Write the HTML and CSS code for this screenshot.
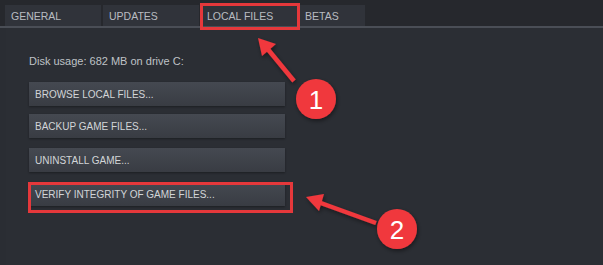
FILE: index.html
```html
<!DOCTYPE html>
<html lang="en">
<head>
  <meta charset="UTF-8">
  <title>Properties - Local Files</title>
  <link rel="stylesheet" href="styles.css">
</head>
<body>
  <!-- Tab strip -->
  <div class="tabs">
    <div class="tab">GENERAL</div>
    <div class="tab">UPDATES</div>
    <div class="tab active">LOCAL FILES</div>
    <div class="tab small">BETAS</div>
  </div>

  <!-- Local files panel -->
  <div class="panel">
    <p class="usage">Disk usage: 682 MB on drive C:</p>
    <div class="buttons">
      <button class="btn">BROWSE LOCAL FILES...</button>
      <button class="btn">BACKUP GAME FILES...</button>
      <button class="btn gap">UNINSTALL GAME...</button>
      <button class="btn">VERIFY INTEGRITY OF GAME FILES...</button>
    </div>
  </div>

  <!-- Annotation overlay -->
  <svg class="marks" width="603" height="265" viewBox="0 0 603 265">
    <defs>
      <filter id="shadow" x="-30%" y="-30%" width="160%" height="160%">
        <feDropShadow dx="1" dy="2" stdDeviation="2" flood-color="#000" flood-opacity="0.45"/>
      </filter>
    </defs>
    <rect x="201.5" y="4.5" width="97" height="24" fill="none" stroke="#e5383b" stroke-width="3"/>
    <rect x="29.5" y="183.5" width="262" height="28" fill="none" stroke="#e5383b" stroke-width="3"/>
    <g fill="#f0393d" stroke="#f0393d" filter="url(#shadow)">
      <line x1="294" y1="81" x2="266" y2="47" stroke-width="4.5"/>
      <polygon points="258,38 262,56 276,44" stroke="none"/>
      <circle cx="316" cy="99" r="20" stroke="none"/>
      <line x1="376" y1="223" x2="318" y2="202" stroke-width="4.5"/>
      <polygon points="306,197 319,211 324,194" stroke="none"/>
      <circle cx="397" cy="229" r="20" stroke="none"/>
    </g>
    <text x="316" y="109" class="num">1</text>
    <text x="397" y="239" class="num">2</text>
  </svg>
</body>
</html>
```

FILE: styles.css
```css
/* Steam properties dialog, dark theme */
body {
  margin: 0;
  width: 603px;
  height: 265px;
  overflow: hidden;
  position: relative;
  background-color: #2a2d33;
  font-family: "Liberation Sans", Arial, sans-serif;
  color: #c4c7cb;
}
.tabs {
  display: flex;
  gap: 2px;
  padding: 5px 0 0 5px;
  background-color: #26282d;
  border-bottom: 2px solid #4a4e56;
}
.tab {
  width: 90px;
  height: 21px;
  padding-left: 6px;
  font-size: 10.5px;
  line-height: 22px;
  color: #b9bcc1;
  background-color: #30333a;
}
.tab.small {
  width: 60px;
}
.panel {
  box-sizing: border-box;
  margin-left: 6px;
  padding: 26px 0 0 23px;
  height: 237px;
  background-color: #2b2e34;
}
.usage {
  margin: 0 0 14px;
  font-size: 11px;
  line-height: 14px;
  color: #bfc2c6;
}
.buttons {
  display: flex;
  flex-direction: column;
  gap: 8px;
  width: 256px;
}
.btn {
  height: 24px;
  padding: 0 0 0 6px;
  border: none;
  text-align: left;
  font-family: "Liberation Sans", Arial, sans-serif;
  font-size: 10px;
  color: #d2d5d8;
  background: linear-gradient(#454951, #393c43);
  box-shadow: 0 1px 2px rgba(0, 0, 0, 0.35);
}
.btn.gap {
  margin-top: 2px;
  margin-bottom: 2px;
}
.marks {
  position: absolute;
  left: 0;
  top: 0;
}
.num {
  fill: #ffffff;
  font-family: "Liberation Sans", Arial, sans-serif;
  font-size: 26px;
  text-anchor: middle;
}
```
